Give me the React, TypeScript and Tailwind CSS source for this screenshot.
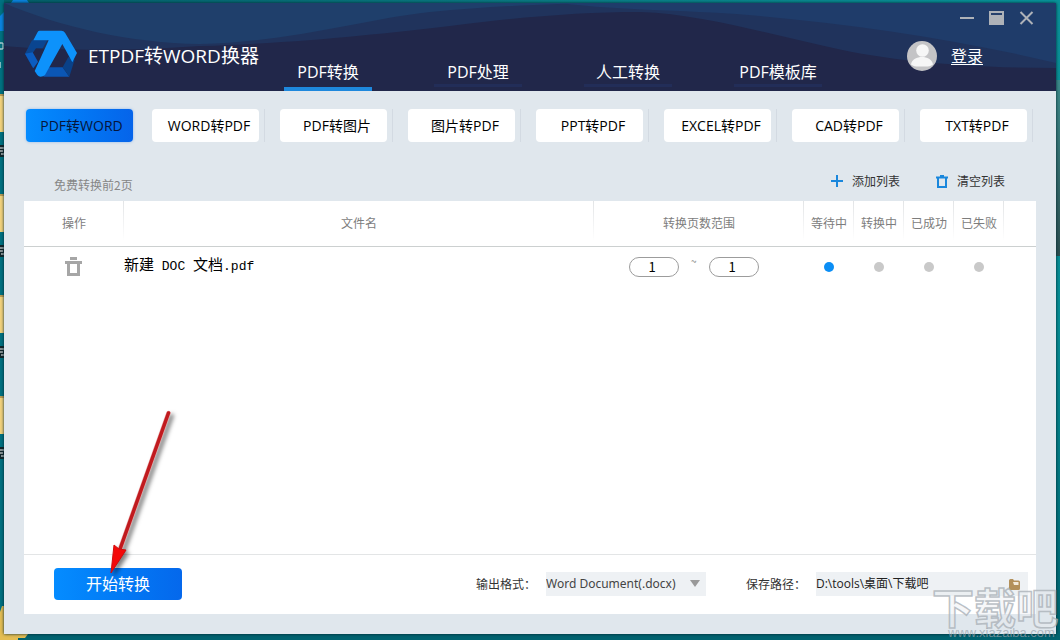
import { useState } from "react";

const NAV = ["PDF转换", "PDF处理", "人工转换", "PDF模板库"];
const MODES = [
  "PDF转WORD",
  "WORD转PDF",
  "PDF转图片",
  "图片转PDF",
  "PPT转PDF",
  "EXCEL转PDF",
  "CAD转PDF",
  "TXT转PDF",
];
const COLUMNS = ["操作", "文件名", "转换页数范围", "等待中", "转换中", "已成功", "已失败"];
const STATES = ["等待中", "转换中", "已成功", "已失败"];

function Desktop() {
  return (
    <div aria-hidden="true" className="absolute inset-0 bg-[#00626f]">
      <div className="absolute inset-x-0 top-0 h-[3px] bg-linear-to-r from-[#04606a] via-[#0a7c84] to-[#08959b]" />
      <div className="absolute inset-y-0 right-0 w-1 bg-linear-to-b from-[#0a9299] via-[#088f96] to-[#00636f]" />
      <div className="absolute top-[80px] right-0 h-[176px] w-1 bg-linear-to-b from-[#3d8c8c] to-[#2c4f50]" />
      <svg className="absolute top-0 left-0" width="30" height="640" viewBox="0 0 30 640">
        <rect width="4" height="640" fill="#007181" />
        <path d="M0 16L4 12V31H0ZM13 0H27L29 3H11Z" fill="#0a84e0" />
        {[94, 194, 295, 396].map((y) => (
          <g key={y}>
            <rect y={y} width="4" height="38" fill="#f2d27c" />
            <rect y={y} width="4" height="2" fill="#b99b55" />
            <rect y={y + 51} width="4" height="12" fill="#11262a" />
            <path d={`M0 ${y + 54}H4M0 ${y + 57}H3M1 ${y + 60}H4`} stroke="#fff" />
          </g>
        ))}
        <path d="M0 43H3V49H0M0 62V68" stroke="#fff" fill="none" />
        <path d="M0 612L2 606H4V634H28L25 638H18V640H0Z" fill="#e3bd53" />
      </svg>
    </div>
  );
}

function HeaderWaves() {
  return (
    <svg
      aria-hidden="true"
      className="absolute inset-0 h-full w-full"
      viewBox="4 3 1052 88"
      preserveAspectRatio="none"
    >
      <rect x="4" y="3" width="1052" height="88" fill="#21274a" />
      <path
        d="M4 3V46C70 52 140 50 200 46C300 43 380 34 450 26C520 17 580 12 640 12C700 14 760 32 820 45C880 60 960 68 1056 68V3Z"
        fill="#20335c"
      />
      <path d="M4 3C60 27 130 43 200 44C290 42 360 20 430 12C500 5 560 4 600 3Z" fill="#1f3f6b" />
      <path d="M560 3C620 11 700 10 760 16C860 25 960 40 1056 63V3Z" fill="#1f3c6a" />
    </svg>
  );
}

function Logo() {
  return (
    <svg aria-hidden="true" width="52" height="48" viewBox="75 91 156 144">
      <path d="M96 122H142L128 146H108L98 160L112 188L98 204L75 162Z" fill="#0a4590" />
      <path d="M75 162L98 158L114 186L100 206Z" fill="#0b5cc0" />
      <path d="M146 203H188L208 231H130Z" fill="#0b56b4" />
      <path d="M188 203L205 172L224 180L208 231Z" fill="#0a4188" />
      <path
        d="M119 93H184Q191 93 195 99L231 160L217 188L187 133L135 226Q130 231 122 231Q116 231 112 226L104 214L146 122H100L113 97Q115 93 119 93Z"
        fill="#0d92fb"
      />
    </svg>
  );
}

function TrashIcon({ className }: { className: string }) {
  return (
    <svg aria-hidden="true" className={className} viewBox="0 0 17 19" fill="none">
      <path d="M5 1.500H12M0 5.500H17" stroke="currentColor" strokeWidth="3" />
      <path d="M3.500 6V17.500H13.500V6" stroke="currentColor" strokeWidth="3" />
    </svg>
  );
}

function Header() {
  return (
    <header className="relative flex h-[88px] font-['Open_Sans','Noto_Sans_CJK_SC',sans-serif] text-white">
      <HeaderWaves />
      <div className="relative flex w-[280px] shrink-0 items-center gap-[11px] pt-[14px] pl-[21px]">
        <Logo />
        <h1 className="mt-1 text-[19px] leading-6 whitespace-nowrap">ETPDF转WORD换器</h1>
      </div>
      <nav className="relative flex items-end gap-[62px]">
        {NAV.map((name, i) => (
          <a
            key={name}
            href="#"
            className={
              i === 0
                ? "w-[88px] rounded-t-xs border-b-4 border-[#1e88dd] pb-[3px] text-center text-base leading-6 whitespace-nowrap"
                : "mb-1 w-[88px] border-b-3 border-[#222d58] text-center text-base leading-6 whitespace-nowrap"
            }
          >
            {name}
          </a>
        ))}
      </nav>
      <div className="relative ml-auto flex flex-col pr-[22px]">
        <div className="flex justify-end gap-[15px] pt-2 text-[#aeb2b8]">
          <button aria-label="最小化">
            <svg width="15" height="15" viewBox="0 0 15 15">
              <path d="M1 7H15" stroke="currentColor" strokeWidth="2" />
            </svg>
          </button>
          <button aria-label="最大化">
            <svg width="15" height="15" viewBox="0 0 15 15">
              <rect width="15" height="14" fill="currentColor" />
              <path d="M2 3H13" stroke="#26406c" strokeWidth="2" />
            </svg>
          </button>
          <button aria-label="关闭">
            <svg width="15" height="15" viewBox="0 0 15 15">
              <path d="M1.500 1L13.500 13M13.500 1L1.500 13" stroke="currentColor" strokeWidth="2" />
            </svg>
          </button>
        </div>
        <div className="mt-[15px] mr-[51px] flex items-center gap-[14px]">
          <svg aria-hidden="true" width="30" height="30" viewBox="0 0 30 30">
            <circle cx="15" cy="15" r="15" fill="#c4c4c6" />
            <circle cx="15.500" cy="9.500" r="6.300" fill="#f6f6f6" />
            <path d="M4 23.500C5 18 10 16 15 16S25 18 26 23.500C23 26 19 25.500 15 25.500S7 26 4 23.500Z" fill="#f6f6f6" />
          </svg>
          <a href="#" className="text-base leading-6 underline underline-offset-2">
            登录
          </a>
        </div>
      </div>
    </header>
  );
}

function ModeTabs({ active, onPick }: { active: number; onPick: (i: number) => void }) {
  return (
    <div className="grid grid-cols-8 pt-[18px] pr-2 pl-5 font-['Open_Sans','Noto_Sans_CJK_SC',sans-serif] text-sm">
      {MODES.map((name, i) => (
        <div key={name} className="flex">
          <button
            onClick={() => onPick(i)}
            className={
              i === active
                ? "mr-px ml-0.5 h-[33px] flex-1 rounded-[4px] bg-linear-to-r from-[#058cff] to-[#0664ea] pl-1 whitespace-nowrap text-[#06153a] shadow-[0_0_3px_#8fb8ea]"
                : "h-[33px] flex-1 rounded-[4px] bg-white pl-[7px] whitespace-nowrap text-black"
            }
          >
            {name}
          </button>
          <span className={i === active ? "w-[18px]" : "mr-[15px] ml-[5px] w-px bg-[#d3dae2]"} />
        </div>
      ))}
    </div>
  );
}

function FileTable() {
  return (
    <table className="w-full table-fixed border-collapse">
      <colgroup>
        <col className="w-[100px]" />
        <col />
        <col className="w-[210px]" />
        <col className="w-[50px]" />
        <col className="w-[50px]" />
        <col className="w-[50px]" />
        <col className="w-[50px]" />
        <col className="w-[32px]" />
      </colgroup>
      <thead>
        <tr className="h-[45px] border-b border-[#ccd0d0] text-xs text-[#7d7d7d]">
          {COLUMNS.map((name) => (
            <th
              key={name}
              scope="col"
              className="bg-linear-to-b from-[#e2e4e6] to-white bg-[length:1px_40px] bg-right-top bg-no-repeat p-0 font-normal"
            >
              {name}
            </th>
          ))}
          <td />
        </tr>
      </thead>
      <tbody>
        <tr className="h-[41px]">
          <td className="p-0 text-center">
            <button aria-label="删除" className="block w-full pr-px text-[#a6a6a6]">
              <TrashIcon className="mx-auto h-[19px] w-[17px]" />
            </button>
          </td>
          <td className="p-0 font-['Liberation_Mono','Noto_Sans_CJK_SC',monospace] text-[13px] text-black">
            <span className="text-[15px]">新建</span> DOC <span className="text-[15px]">文档</span>.pdf
          </td>
          <td className="p-0">
            <div className="flex items-center justify-center gap-3 pr-[10px]">
              <input
                aria-label="起始页"
                defaultValue="1"
                className="h-5 w-[50px] rounded-full border border-[#9c9c9c] pr-1 text-center text-[13px] text-black"
              />
              <span className="w-[6px] pb-3 text-[10px] leading-3 text-[#888]">~</span>
              <input
                aria-label="结束页"
                defaultValue="1"
                className="h-5 w-[50px] rounded-full border border-[#9c9c9c] pr-1 text-center text-[13px] text-black"
              />
            </div>
          </td>
          {STATES.map((s, i) => (
            <td key={s} className="p-0">
              <span
                role="img"
                aria-label={s}
                className={
                  i === 0
                    ? "mx-auto block size-[10px] rounded-full bg-[#0b8ef5]"
                    : "mx-auto block size-[10px] rounded-full bg-[#c9c9c9]"
                }
              />
            </td>
          ))}
          <td />
        </tr>
      </tbody>
    </table>
  );
}

function Footer() {
  return (
    <footer className="flex items-center border-t border-[#e3e5e6] pt-[13px] pr-2 pb-[14px] pl-[30px] text-xs text-[#333]">
      <button className="h-8 w-32 rounded-[4px] bg-linear-to-r from-[#058cff] to-[#0568ec] pb-0.5 text-base text-white">
        开始转换
      </button>
      <label htmlFor="format" className="ml-auto w-[70px]">
        输出格式：
      </label>
      <div className="relative">
        <select
          id="format"
          className="h-6 w-40 appearance-none bg-[#eef1f4] font-['Noto_Sans',sans-serif] text-xs text-[#444]"
        >
          <option>Word Document(.docx)</option>
        </select>
        <svg
          aria-hidden="true"
          className="pointer-events-none absolute top-2 right-[6px]"
          width="10"
          height="8"
          viewBox="0 0 10 8"
        >
          <path d="M0 0H10L5 7Z" fill="#999" />
        </svg>
      </div>
      <label htmlFor="path" className="ml-10 w-[70px]">
        保存路径：
      </label>
      <div className="flex h-6 w-[212px] items-center bg-[#eef1f4] pr-2">
        <input
          id="path"
          defaultValue="D:\tools\桌面\下载吧"
          className="min-w-0 flex-1 bg-transparent font-['Open_Sans','Noto_Sans_CJK_SC',sans-serif] text-xs text-[#222]"
        />
        <button aria-label="浏览">
          <svg width="11" height="11" viewBox="0 0 11 11">
            <path d="M0 1.500Q0 0 1.500 0H4L5 1.500H9.500Q11 1.500 11 3V9.500Q11 11 9.500 11H1.500Q0 11 0 9.500Z" fill="#b3905a" />
            <path d="M4 3H9.500V6H5Z" fill="#f3ead9" />
          </svg>
        </button>
      </div>
    </footer>
  );
}

function Arrow() {
  return (
    <svg
      aria-hidden="true"
      className="pointer-events-none absolute top-[405px] left-[100px] drop-shadow-[3px_3px_2px_#00000080]"
      width="90"
      height="175"
      viewBox="100 405 90 175"
    >
      <path d="M168.500 413L119 552" stroke="#e9a3a3" strokeWidth="4.500" strokeLinecap="round" />
      <path d="M168.500 413L119 552" stroke="#c01a1e" strokeWidth="3.500" strokeLinecap="round" />
      <path d="M111 573L114 545L119 549L126 550Z" fill="#f40808" stroke="#d00c0c" />
    </svg>
  );
}

function Watermark() {
  return (
    <svg
      aria-hidden="true"
      className="pointer-events-none absolute right-0 bottom-0 font-['Noto_Sans_CJK_SC',sans-serif] font-bold"
      width="130"
      height="66"
      viewBox="0 0 130 66"
    >
      <text x="2" y="50" fontSize="42" fill="#e8ecef" fillOpacity="0.4" stroke="#aab1b8" strokeOpacity="0.8" strokeWidth="1.500">
        下载吧
      </text>
      <text x="18" y="63" fontSize="13" fill="#9aa5ad" fillOpacity="0.7" fontFamily="Liberation Sans" fontWeight="400">
        www.xiazaiba.com
      </text>
    </svg>
  );
}

export default function App() {
  const [active, setActive] = useState(0);
  return (
    <div className="relative flex min-h-screen flex-col px-1 pt-[3px] pb-[6px] font-['Noto_Sans_CJK_SC',sans-serif]">
      <Desktop />
      <div className="relative flex flex-1 flex-col bg-[#e0e7ed] shadow-[0_0_3px_#00222a]">
        <Header />
        <main className="flex flex-1 flex-col">
          <ModeTabs active={active} onPick={setActive} />
          <div className="flex items-center justify-between pt-[26px] pr-[51px] pb-[7px] pl-[50px] text-xs leading-[18px]">
            <p className="pt-2 text-[#868686]">免费转换前2页</p>
            <div className="flex gap-9 text-[#333]">
              <button className="flex items-center gap-[9px]">
                <svg aria-hidden="true" width="12" height="12" viewBox="0 0 12 12">
                  <path d="M6 0V12M0 6H12" stroke="#1a87dc" strokeWidth="2" />
                </svg>
                添加列表
              </button>
              <button className="flex items-center gap-[9px]">
                <svg aria-hidden="true" width="12" height="13" viewBox="0 0 12 13" fill="none">
                  <path d="M4 1H8M0 2.500H12M2 3V12H10V3" stroke="#1a87dc" strokeWidth="2" />
                </svg>
                清空列表
              </button>
            </div>
          </div>
          <section className="mx-5 mb-5 flex flex-1 flex-col justify-between bg-white">
            <FileTable />
            <Footer />
          </section>
        </main>
      </div>
      <Arrow />
      <Watermark />
    </div>
  );
}
